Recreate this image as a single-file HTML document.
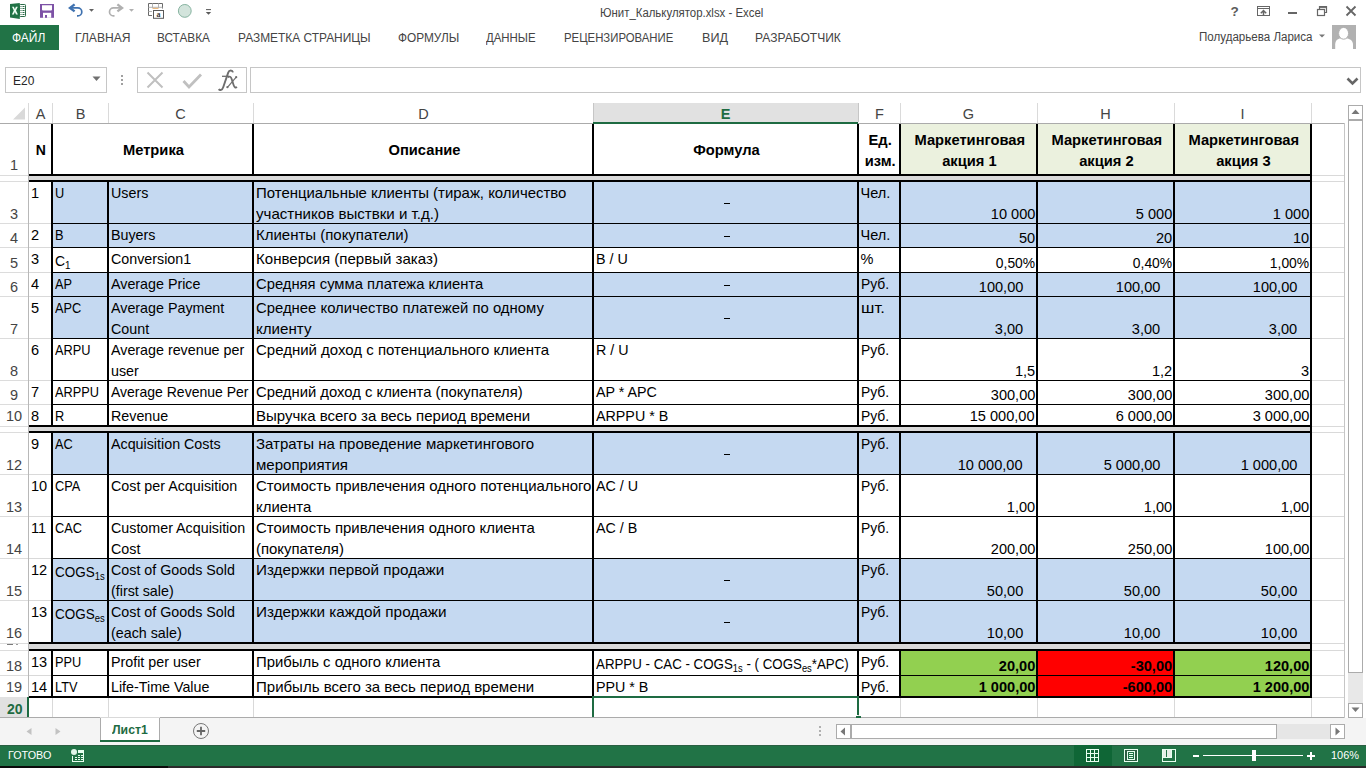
<!DOCTYPE html><html><head><meta charset="utf-8"><title>Excel</title><style>html,body{margin:0;padding:0;width:1366px;height:768px;overflow:hidden;background:#fff;font-family:"Liberation Sans",sans-serif;}#root{position:relative;width:1366px;height:768px;overflow:hidden;}</style></head><body><div id="root">
<svg style="position:absolute;left:0px;top:0px" width="60" height="22" viewBox="0 0 60 22"><rect x="19.5" y="4.5" width="6" height="12" rx="0.8" fill="#fff" stroke="#2a6b47" stroke-width="1"/><path d="M20.5 6.5h1M22.5 6.5h2M20.5 8.5h1M22.5 8.5h2M20.5 10.5h1M22.5 10.5h2M20.5 12.5h1M22.5 12.5h2M20.5 14.5h1M22.5 14.5h2" stroke="#2a6b47" stroke-width="1"/><path d="M10 4 L19.8 3 V19 L10 17.5 Z" fill="#217346"/><path d="M12 6.8 H13.9 L14.9 9.2 L15.9 6.8 H17.8 L16 10.6 L17.9 14.4 H16 L14.9 12 L13.8 14.4 H11.9 L13.8 10.6 Z" fill="#f0fff4"/><path d="M40 4 H54 V17.8 H40 Z" fill="#7d52a6"/><path d="M42 5.2 H52 V9.5 Q52 10.5 51 10.5 H43 Q42 10.5 42 9.5 Z" fill="#fff"/><rect x="43" y="12.8" width="8.2" height="5" fill="#fff"/><rect x="45" y="15" width="2" height="2.8" fill="#7d52a6"/></svg>
<svg style="position:absolute;left:64px;top:0px" width="80" height="22" viewBox="0 0 80 22"><path d="M10.6 4.4 L6 7.9 L10.6 11.4" fill="none" stroke="#3f72b0" stroke-width="2.4" stroke-linejoin="miter"/><path d="M7.5 7.9 H13.8 A4 4 0 0 1 13.8 15.9 H13" fill="none" stroke="#3f72b0" stroke-width="1.7"/><path d="M25 9 H30 L27.5 11.8 Z" fill="#606060"/><path d="M53.4 4.4 L58 7.9 L53.4 11.4" fill="none" stroke="#b0b0b0" stroke-width="2.4" stroke-linejoin="miter"/><path d="M56.5 7.9 H49.5 A4 4 0 0 0 49.5 15.9 H50.5" fill="none" stroke="#b0b0b0" stroke-width="1.7"/><path d="M65 9 H70 L67.5 11.8 Z" fill="#b0b0b0"/></svg>
<svg style="position:absolute;left:142px;top:0px" width="76" height="22" viewBox="0 0 76 22"><path d="M6.5 15.5 V3.5 H20.5 V8.5" fill="none" stroke="#6a6a6a" stroke-width="1"/><path d="M6.5 15.5 H10" stroke="#6a6a6a" stroke-width="1"/><path d="M6.5 7.3 H20.5 M10.5 3.5 V8 M16.5 3.5 V8 M6.5 11.5 H10" stroke="#b4b4b4" stroke-width="1"/><path d="M10.5 8.4 H16.5" stroke="#e8b070" stroke-width="1"/><rect x="11.5" y="10.5" width="10" height="7.8" fill="#fff" stroke="#5a5a5a" stroke-width="1"/><text x="16.6" y="16.6" font-size="8" font-family="Liberation Serif" font-weight="bold" text-anchor="middle" fill="#3a3a3a">a</text><circle cx="42.8" cy="10.9" r="6.4" fill="#d3e4dc" stroke="#86b3a0" stroke-width="1"/><path d="M64 9.6 H69" stroke="#5a5a5a" stroke-width="1"/><path d="M63.8 12 H69.2 L66.5 14.8 Z" fill="#5a5a5a"/></svg>
<div style="position:absolute;left:600px;top:7.34px;font-size:12px;line-height:12px;font-weight:400;color:#444444;white-space:nowrap;transform:scaleX(0.95);transform-origin:0 0;">Юнит_Калькулятор.xlsx - Excel</div>
<svg style="position:absolute;left:1225px;top:4px" width="141" height="16" viewBox="0 0 141 16"><text x="9.5" y="12.3" font-size="13.5" font-weight="bold" font-family="Liberation Sans" text-anchor="middle" fill="#5a5a5a">?</text><rect x="32.5" y="2.5" width="12" height="9" fill="none" stroke="#666" stroke-width="1"/><path d="M32.5 4.5 H44.5" stroke="#666" stroke-width="1"/><path d="M38.5 11.5 V6.8 M35.8 9.2 L38.5 6.5 L41.2 9.2" fill="none" stroke="#666" stroke-width="1.5"/><rect x="63" y="8" width="9" height="2" fill="#666"/><rect x="92.5" y="5.5" width="7" height="6" fill="none" stroke="#666" stroke-width="1.2"/><path d="M94.5 5.5 V2.5 H101.5 V8.5 H99.5" fill="none" stroke="#666" stroke-width="1.2"/><path d="M94.5 3.6 H101.5" stroke="#666" stroke-width="1"/><path d="M121.5 2.5 L130.5 11.5 M130.5 2.5 L121.5 11.5" stroke="#666" stroke-width="1.8"/></svg>
<div style="position:absolute;left:0px;top:25px;width:59px;height:25px;background:#217346;"></div>
<div style="position:absolute;left:12px;top:31.84px;font-size:12px;line-height:12px;font-weight:400;color:#fff;white-space:nowrap;">ФАЙЛ</div>
<div style="position:absolute;left:75px;top:31.84px;font-size:12px;line-height:12px;font-weight:400;color:#444444;white-space:nowrap;transform:scaleX(1.009);transform-origin:0 0;">ГЛАВНАЯ</div>
<div style="position:absolute;left:157px;top:31.84px;font-size:12px;line-height:12px;font-weight:400;color:#444444;white-space:nowrap;transform:scaleX(0.983);transform-origin:0 0;">ВСТАВКА</div>
<div style="position:absolute;left:237.9px;top:31.84px;font-size:12px;line-height:12px;font-weight:400;color:#444444;white-space:nowrap;transform:scaleX(0.993);transform-origin:0 0;">РАЗМЕТКА СТРАНИЦЫ</div>
<div style="position:absolute;left:398px;top:31.84px;font-size:12px;line-height:12px;font-weight:400;color:#444444;white-space:nowrap;transform:scaleX(0.987);transform-origin:0 0;">ФОРМУЛЫ</div>
<div style="position:absolute;left:486.3px;top:31.84px;font-size:12px;line-height:12px;font-weight:400;color:#444444;white-space:nowrap;transform:scaleX(0.952);transform-origin:0 0;">ДАННЫЕ</div>
<div style="position:absolute;left:564.2px;top:31.84px;font-size:12px;line-height:12px;font-weight:400;color:#444444;white-space:nowrap;transform:scaleX(0.947);transform-origin:0 0;">РЕЦЕНЗИРОВАНИЕ</div>
<div style="position:absolute;left:701.6px;top:31.84px;font-size:12px;line-height:12px;font-weight:400;color:#444444;white-space:nowrap;transform:scaleX(1.05);transform-origin:0 0;">ВИД</div>
<div style="position:absolute;left:754.6px;top:31.84px;font-size:12px;line-height:12px;font-weight:400;color:#444444;white-space:nowrap;transform:scaleX(1.004);transform-origin:0 0;">РАЗРАБОТЧИК</div>
<div style="position:absolute;left:1198.5px;top:30.84px;font-size:12px;line-height:12px;font-weight:400;color:#444444;white-space:nowrap;transform:scaleX(0.964);transform-origin:0 0;">Полударьева Лариса</div>
<svg style="position:absolute;left:1319px;top:34px" width="7" height="5"><path d="M0 0.5 H6 L3 3.5 Z" fill="#777"/></svg>
<svg style="position:absolute;left:1332px;top:25px" width="24" height="24" viewBox="0 0 24 24"><rect width="24" height="24" fill="#b1b1b1"/><path d="M3.2 24 V19.5 C3.2 15.6 5.6 13.4 8.6 13.4 H14.6 C17.8 13.4 21 15.6 21 19.5 V24 Z" fill="#fff"/><ellipse cx="11.6" cy="8.3" rx="5" ry="5.9" fill="#fff" stroke="#b1b1b1" stroke-width="1"/></svg>
<div style="position:absolute;left:5px;top:67px;width:100px;height:24px;border:1px solid #c6c6c6;background:#fff"></div>
<div style="position:absolute;left:12.5px;top:74.49px;font-size:13px;line-height:13px;font-weight:400;color:#262626;white-space:nowrap;transform:scaleX(0.92);transform-origin:0 0;">E20</div>
<svg style="position:absolute;left:92px;top:76px" width="9" height="6"><path d="M0.5 0.5 H8.5 L4.5 5 Z" fill="#707070"/></svg>
<div style="position:absolute;left:121px;top:75px;width:2px;height:2px;background:#a0a0a0;"></div>
<div style="position:absolute;left:121px;top:79px;width:2px;height:2px;background:#a0a0a0;"></div>
<div style="position:absolute;left:121px;top:83px;width:2px;height:2px;background:#a0a0a0;"></div>
<div style="position:absolute;left:137px;top:67px;width:108px;height:24px;border:1px solid #c6c6c6;background:#fff"></div>
<svg style="position:absolute;left:145px;top:71px" width="22" height="18" viewBox="0 0 22 18"><path d="M2.5 1.5 L17.5 16.5 M17.5 1.5 L2.5 16.5" stroke="#c0c0c0" stroke-width="2"/></svg>
<svg style="position:absolute;left:182px;top:72px" width="22" height="18" viewBox="0 0 22 18"><path d="M1.5 9 L7 15 L19 2.5" fill="none" stroke="#c0c0c0" stroke-width="2.8"/></svg>
<svg style="position:absolute;left:210px;top:64px" width="34" height="30" viewBox="210 64 34 30"><path d="M233 72.4 C232.4 69.9 229.2 69.7 228.2 72.6 L223.2 87.2 C222.2 90.2 219.9 90.7 218.7 89.2" fill="none" stroke="#6e6e6e" stroke-width="1.9"/><path d="M222 76.3 H229" stroke="#6e6e6e" stroke-width="1.3"/><path d="M227.6 77.2 C229.6 75.9 230.9 76.7 231.7 79.1 L233.6 85 C234.4 87.6 235.6 88 237 87" fill="none" stroke="#6e6e6e" stroke-width="1.8"/><path d="M236.4 76.8 L227.2 87.6" fill="none" stroke="#6e6e6e" stroke-width="1.2"/><circle cx="236.2" cy="77.2" r="1.1" fill="#6e6e6e"/><circle cx="227.4" cy="87.2" r="1.1" fill="#6e6e6e"/></svg>
<div style="position:absolute;left:250px;top:67px;width:1109px;height:24px;border:1px solid #c6c6c6;background:#fff"></div>
<svg style="position:absolute;left:1346px;top:77px" width="13" height="10" viewBox="0 0 13 10"><path d="M1.5 1.5 L6.5 6.5 L11.5 1.5" fill="none" stroke="#666" stroke-width="2.6"/></svg>
<div style="position:absolute;left:0px;top:718px;width:1366px;height:27px;background:#f4f4f4;"></div>
<div style="position:absolute;left:1345px;top:103px;width:21px;height:615px;background:#fff;"></div>
<div style="position:absolute;left:1348px;top:105px;width:13px;height:13px;border:1px solid #ababab;background:#fff"></div>
<svg style="position:absolute;left:1351px;top:109px" width="9" height="6"><path d="M0.5 5 L4.5 0.5 L8.5 5 Z" fill="#777"/></svg>
<div style="position:absolute;left:1348px;top:120px;width:13px;height:551px;border:1px solid #ababab;background:#fff"></div>
<div style="position:absolute;left:1348px;top:673px;width:15px;height:30px;background:#e8e8e8;"></div>
<div style="position:absolute;left:1348px;top:703px;width:13px;height:13px;border:1px solid #ababab;background:#fff"></div>
<svg style="position:absolute;left:1351px;top:707px" width="9" height="6"><path d="M0.5 0.5 L4.5 5 L8.5 0.5 Z" fill="#777"/></svg>
<svg style="position:absolute;left:26px;top:728px" width="6" height="7"><path d="M5.5 0 V7 L0.5 3.5 Z" fill="#c2c2c2"/></svg>
<svg style="position:absolute;left:55px;top:728px" width="6" height="7"><path d="M0.5 0 V7 L5.5 3.5 Z" fill="#c2c2c2"/></svg>
<div style="position:absolute;left:100px;top:717px;width:60px;height:24px;background:#fff;"></div>
<div style="position:absolute;left:100px;top:717px;width:1px;height:24px;background:#ababab;"></div>
<div style="position:absolute;left:159px;top:717px;width:1px;height:24px;background:#ababab;"></div>
<div style="position:absolute;left:100px;top:740px;width:60px;height:2px;background:#1e6b42;"></div>
<div style="position:absolute;left:101px;top:717px;width:58px;height:1px;background:#fff;"></div>
<div style="position:absolute;left:112px;top:724.42px;font-size:12.5px;line-height:12.5px;font-weight:700;color:#1e6b42;white-space:nowrap;transform:scaleX(0.98);transform-origin:0 0;">Лист1</div>
<svg style="position:absolute;left:192px;top:722px" width="18" height="18" viewBox="0 0 18 18"><circle cx="9" cy="9" r="7.5" fill="none" stroke="#777" stroke-width="1"/><path d="M9 4.8 V13.2 M4.8 9 H13.2" stroke="#666" stroke-width="1.8"/></svg>
<div style="position:absolute;left:819px;top:726px;width:2px;height:2px;background:#b0b0b0;"></div>
<div style="position:absolute;left:819px;top:730px;width:2px;height:2px;background:#b0b0b0;"></div>
<div style="position:absolute;left:819px;top:734px;width:2px;height:2px;background:#b0b0b0;"></div>
<div style="position:absolute;left:836px;top:724px;width:13px;height:13px;border:1px solid #ababab;background:#fff"></div>
<svg style="position:absolute;left:840px;top:727px" width="6" height="9"><path d="M5 0.5 V8.5 L0.5 4.5 Z" fill="#777"/></svg>
<div style="position:absolute;left:851px;top:724px;width:424px;height:13px;border:1px solid #ababab;background:#fff"></div>
<div style="position:absolute;left:1277px;top:724px;width:53px;height:15px;background:#e6e6e6;"></div>
<div style="position:absolute;left:1330px;top:724px;width:13px;height:13px;border:1px solid #ababab;background:#fff"></div>
<svg style="position:absolute;left:1335px;top:727px" width="6" height="9"><path d="M0.5 0.5 V8.5 L5 4.5 Z" fill="#777"/></svg>
<div style="position:absolute;left:0px;top:745px;width:1366px;height:21px;background:#217346;"></div>
<div style="position:absolute;left:0px;top:745px;width:1366px;height:1px;background:#2a5e42;"></div>
<div style="position:absolute;left:0px;top:766px;width:168px;height:2px;background:#0a0a0a;"></div>
<div style="position:absolute;left:168px;top:766px;width:1198px;height:2px;background:#2b2b2b;"></div>
<div style="position:absolute;left:8px;top:749.69px;font-size:11px;line-height:11px;font-weight:400;color:#fff;white-space:nowrap;transform:scaleX(0.98);transform-origin:0 0;">ГОТОВО</div>
<svg style="position:absolute;left:64px;top:745px" width="28" height="21" viewBox="64 745 28 21"><circle cx="74" cy="752" r="3" fill="#e0f5e8"/></svg>
<div style="position:absolute;left:78px;top:750px;width:6px;height:3px;background:#e8fff0;"></div>
<div style="position:absolute;left:83px;top:750px;width:1px;height:12px;background:#e8fff0;"></div>
<div style="position:absolute;left:72px;top:761px;width:12px;height:1px;background:#e8fff0;"></div>
<div style="position:absolute;left:72px;top:756px;width:1px;height:6px;background:#e8fff0;"></div>
<div style="position:absolute;left:77.5px;top:755px;width:2px;height:1px;background:#e8fff0;"></div>
<div style="position:absolute;left:80.5px;top:755px;width:2px;height:1px;background:#e8fff0;"></div>
<div style="position:absolute;left:74.5px;top:757px;width:2px;height:1px;background:#e8fff0;"></div>
<div style="position:absolute;left:77.5px;top:757px;width:2px;height:1px;background:#e8fff0;"></div>
<div style="position:absolute;left:80.5px;top:757px;width:2px;height:1px;background:#e8fff0;"></div>
<div style="position:absolute;left:74.5px;top:759px;width:2px;height:1px;background:#e8fff0;"></div>
<div style="position:absolute;left:77.5px;top:759px;width:2px;height:1px;background:#e8fff0;"></div>
<div style="position:absolute;left:80.5px;top:759px;width:2px;height:1px;background:#e8fff0;"></div>
<div style="position:absolute;left:1074px;top:745px;width:38px;height:21px;background:#0f6636;"></div>
<div style="position:absolute;left:1086px;top:749px;width:1px;height:13px;background:#e8fff0;"></div>
<div style="position:absolute;left:1090px;top:749px;width:1px;height:13px;background:#e8fff0;"></div>
<div style="position:absolute;left:1094px;top:749px;width:1px;height:13px;background:#e8fff0;"></div>
<div style="position:absolute;left:1098px;top:749px;width:1px;height:13px;background:#e8fff0;"></div>
<div style="position:absolute;left:1086px;top:749px;width:13px;height:1px;background:#e8fff0;"></div>
<div style="position:absolute;left:1086px;top:753px;width:13px;height:1px;background:#e8fff0;"></div>
<div style="position:absolute;left:1086px;top:757px;width:13px;height:1px;background:#e8fff0;"></div>
<div style="position:absolute;left:1086px;top:761px;width:13px;height:1px;background:#e8fff0;"></div>
<div style="position:absolute;left:1124px;top:749px;width:14px;height:13px;background:#e8fff0;"></div>
<div style="position:absolute;left:1125px;top:750px;width:12px;height:11px;background:#2c5e43;"></div>
<div style="position:absolute;left:1127px;top:751px;width:8px;height:9px;background:#e8fff0;"></div>
<div style="position:absolute;left:1128px;top:752px;width:6px;height:7px;background:#217346;"></div>
<div style="position:absolute;left:1129px;top:753px;width:4px;height:1px;background:#e8fff0;"></div>
<div style="position:absolute;left:1129px;top:755px;width:4px;height:1px;background:#e8fff0;"></div>
<div style="position:absolute;left:1129px;top:757px;width:4px;height:1px;background:#e8fff0;"></div>
<div style="position:absolute;left:1162px;top:749px;width:14px;height:13px;background:#e8fff0;"></div>
<div style="position:absolute;left:1163px;top:750px;width:12px;height:11px;background:#217346;"></div>
<div style="position:absolute;left:1163px;top:750px;width:3px;height:7px;background:#e6efe8;"></div>
<div style="position:absolute;left:1167px;top:750px;width:4px;height:7px;background:#e6efe8;"></div>
<div style="position:absolute;left:1162px;top:757px;width:10px;height:1px;background:#e8fff0;"></div>
<div style="position:absolute;left:1171px;top:750px;width:1px;height:8px;background:#e8fff0;"></div>
<div style="position:absolute;left:1193px;top:755px;width:6px;height:2px;background:#fff;"></div>
<div style="position:absolute;left:1203px;top:755px;width:100px;height:1px;background:#fff;"></div>
<div style="position:absolute;left:1252px;top:750px;width:4px;height:11px;background:#fff;"></div>
<div style="position:absolute;left:1307px;top:755px;width:8px;height:2px;background:#fff;"></div>
<div style="position:absolute;left:1310px;top:752px;width:2px;height:8px;background:#fff;"></div>
<div style="position:absolute;left:1331px;top:750.26px;font-size:11.5px;line-height:11.5px;font-weight:400;color:#fff;white-space:nowrap;transform:scaleX(0.95);transform-origin:0 0;">106%</div>
<div style="position:absolute;left:593px;top:103px;width:265px;height:19px;background:#e1e1e1;"></div>
<div style="position:absolute;left:593px;top:122px;width:265px;height:2px;background:#1e6b42;"></div>
<div style="position:absolute;left:28px;top:103px;width:1px;height:20px;background:#dadada;"></div>
<div style="position:absolute;left:52px;top:103px;width:1px;height:20px;background:#dadada;"></div>
<div style="position:absolute;left:108px;top:103px;width:1px;height:20px;background:#dadada;"></div>
<div style="position:absolute;left:253px;top:103px;width:1px;height:20px;background:#dadada;"></div>
<div style="position:absolute;left:593px;top:103px;width:1px;height:19px;background:#c6c6c6;"></div>
<div style="position:absolute;left:858px;top:103px;width:1px;height:19px;background:#c6c6c6;"></div>
<div style="position:absolute;left:900px;top:103px;width:1px;height:20px;background:#dadada;"></div>
<div style="position:absolute;left:1037px;top:103px;width:1px;height:20px;background:#dadada;"></div>
<div style="position:absolute;left:1174px;top:103px;width:1px;height:20px;background:#dadada;"></div>
<div style="position:absolute;left:1311px;top:103px;width:1px;height:20px;background:#dadada;"></div>
<div style="position:absolute;left:0px;top:123px;width:593px;height:1px;background:#ababab;"></div>
<div style="position:absolute;left:858px;top:123px;width:486px;height:1px;background:#ababab;"></div>
<svg style="position:absolute;left:13px;top:107px" width="13" height="13"><path d="M12 0.5 V12.5 H0 Z" fill="#d9d9d9"/></svg>
<div style="position:absolute;left:40.5px;top:106.72px;font-size:14.5px;line-height:14.5px;font-weight:400;color:#444;white-space:nowrap;transform:translateX(-50%) scaleX(1.0);transform-origin:0 0;">A</div>
<div style="position:absolute;left:80.5px;top:106.72px;font-size:14.5px;line-height:14.5px;font-weight:400;color:#444;white-space:nowrap;transform:translateX(-50%) scaleX(1.0);transform-origin:0 0;">B</div>
<div style="position:absolute;left:180.5px;top:106.72px;font-size:14.5px;line-height:14.5px;font-weight:400;color:#444;white-space:nowrap;transform:translateX(-50%) scaleX(1.0);transform-origin:0 0;">C</div>
<div style="position:absolute;left:423.5px;top:106.72px;font-size:14.5px;line-height:14.5px;font-weight:400;color:#444;white-space:nowrap;transform:translateX(-50%) scaleX(1.0);transform-origin:0 0;">D</div>
<div style="position:absolute;left:725.5px;top:106.72px;font-size:14.5px;line-height:14.5px;font-weight:700;color:#1e6b42;white-space:nowrap;transform:translateX(-50%) scaleX(1.0);transform-origin:0 0;">E</div>
<div style="position:absolute;left:879.5px;top:106.72px;font-size:14.5px;line-height:14.5px;font-weight:400;color:#444;white-space:nowrap;transform:translateX(-50%) scaleX(1.0);transform-origin:0 0;">F</div>
<div style="position:absolute;left:968.5px;top:106.72px;font-size:14.5px;line-height:14.5px;font-weight:400;color:#444;white-space:nowrap;transform:translateX(-50%) scaleX(1.0);transform-origin:0 0;">G</div>
<div style="position:absolute;left:1105.5px;top:106.72px;font-size:14.5px;line-height:14.5px;font-weight:400;color:#444;white-space:nowrap;transform:translateX(-50%) scaleX(1.0);transform-origin:0 0;">H</div>
<div style="position:absolute;left:1242.5px;top:106.72px;font-size:14.5px;line-height:14.5px;font-weight:400;color:#444;white-space:nowrap;transform:translateX(-50%) scaleX(1.0);transform-origin:0 0;">I</div>
<div style="position:absolute;left:28px;top:123px;width:1px;height:594px;background:#b8b8b8;"></div>
<div style="position:absolute;left:0px;top:175px;width:28px;height:1px;background:#dcdcdc;"></div>
<div style="position:absolute;left:0px;top:181px;width:28px;height:1px;background:#dcdcdc;"></div>
<div style="position:absolute;left:0px;top:223px;width:28px;height:1px;background:#dcdcdc;"></div>
<div style="position:absolute;left:0px;top:247px;width:28px;height:1px;background:#dcdcdc;"></div>
<div style="position:absolute;left:0px;top:272px;width:28px;height:1px;background:#dcdcdc;"></div>
<div style="position:absolute;left:0px;top:296px;width:28px;height:1px;background:#dcdcdc;"></div>
<div style="position:absolute;left:0px;top:338px;width:28px;height:1px;background:#dcdcdc;"></div>
<div style="position:absolute;left:0px;top:380px;width:28px;height:1px;background:#dcdcdc;"></div>
<div style="position:absolute;left:0px;top:404px;width:28px;height:1px;background:#dcdcdc;"></div>
<div style="position:absolute;left:0px;top:426px;width:28px;height:1px;background:#dcdcdc;"></div>
<div style="position:absolute;left:0px;top:432px;width:28px;height:1px;background:#dcdcdc;"></div>
<div style="position:absolute;left:0px;top:474px;width:28px;height:1px;background:#dcdcdc;"></div>
<div style="position:absolute;left:0px;top:516px;width:28px;height:1px;background:#dcdcdc;"></div>
<div style="position:absolute;left:0px;top:558px;width:28px;height:1px;background:#dcdcdc;"></div>
<div style="position:absolute;left:0px;top:600px;width:28px;height:1px;background:#dcdcdc;"></div>
<div style="position:absolute;left:0px;top:643px;width:28px;height:1px;background:#dcdcdc;"></div>
<div style="position:absolute;left:0px;top:650px;width:28px;height:1px;background:#dcdcdc;"></div>
<div style="position:absolute;left:0px;top:675px;width:28px;height:1px;background:#dcdcdc;"></div>
<div style="position:absolute;left:0px;top:697px;width:28px;height:1px;background:#dcdcdc;"></div>
<div style="position:absolute;left:0px;top:717px;width:28px;height:1px;background:#dcdcdc;"></div>
<div style="position:absolute;left:0px;top:697px;width:27px;height:20px;background:#e1e1e1;"></div>
<div style="position:absolute;left:27px;top:697px;width:2px;height:20px;background:#1e6b42;"></div>
<div style="position:absolute;left:14px;top:157.72px;font-size:14.5px;line-height:14.5px;font-weight:400;color:#444;white-space:nowrap;transform:translateX(-50%) scaleX(1.0);transform-origin:0 0;">1</div>
<div style="position:absolute;left:14px;top:206.72px;font-size:14.5px;line-height:14.5px;font-weight:400;color:#444;white-space:nowrap;transform:translateX(-50%) scaleX(1.0);transform-origin:0 0;">3</div>
<div style="position:absolute;left:14px;top:230.72px;font-size:14.5px;line-height:14.5px;font-weight:400;color:#444;white-space:nowrap;transform:translateX(-50%) scaleX(1.0);transform-origin:0 0;">4</div>
<div style="position:absolute;left:14px;top:255.72px;font-size:14.5px;line-height:14.5px;font-weight:400;color:#444;white-space:nowrap;transform:translateX(-50%) scaleX(1.0);transform-origin:0 0;">5</div>
<div style="position:absolute;left:14px;top:279.72px;font-size:14.5px;line-height:14.5px;font-weight:400;color:#444;white-space:nowrap;transform:translateX(-50%) scaleX(1.0);transform-origin:0 0;">6</div>
<div style="position:absolute;left:14px;top:321.72px;font-size:14.5px;line-height:14.5px;font-weight:400;color:#444;white-space:nowrap;transform:translateX(-50%) scaleX(1.0);transform-origin:0 0;">7</div>
<div style="position:absolute;left:14px;top:363.72px;font-size:14.5px;line-height:14.5px;font-weight:400;color:#444;white-space:nowrap;transform:translateX(-50%) scaleX(1.0);transform-origin:0 0;">8</div>
<div style="position:absolute;left:14px;top:387.72px;font-size:14.5px;line-height:14.5px;font-weight:400;color:#444;white-space:nowrap;transform:translateX(-50%) scaleX(1.0);transform-origin:0 0;">9</div>
<div style="position:absolute;left:14px;top:408.72px;font-size:14.5px;line-height:14.5px;font-weight:400;color:#444;white-space:nowrap;transform:translateX(-50%) scaleX(1.0);transform-origin:0 0;">10</div>
<div style="position:absolute;left:14px;top:457.72px;font-size:14.5px;line-height:14.5px;font-weight:400;color:#444;white-space:nowrap;transform:translateX(-50%) scaleX(1.0);transform-origin:0 0;">12</div>
<div style="position:absolute;left:14px;top:499.72px;font-size:14.5px;line-height:14.5px;font-weight:400;color:#444;white-space:nowrap;transform:translateX(-50%) scaleX(1.0);transform-origin:0 0;">13</div>
<div style="position:absolute;left:14px;top:541.72px;font-size:14.5px;line-height:14.5px;font-weight:400;color:#444;white-space:nowrap;transform:translateX(-50%) scaleX(1.0);transform-origin:0 0;">14</div>
<div style="position:absolute;left:14px;top:583.72px;font-size:14.5px;line-height:14.5px;font-weight:400;color:#444;white-space:nowrap;transform:translateX(-50%) scaleX(1.0);transform-origin:0 0;">15</div>
<div style="position:absolute;left:14px;top:625.72px;font-size:14.5px;line-height:14.5px;font-weight:400;color:#444;white-space:nowrap;transform:translateX(-50%) scaleX(1.0);transform-origin:0 0;">16</div>
<div style="position:absolute;left:14px;top:658.72px;font-size:14.5px;line-height:14.5px;font-weight:400;color:#444;white-space:nowrap;transform:translateX(-50%) scaleX(1.0);transform-origin:0 0;">18</div>
<div style="position:absolute;left:14px;top:679.72px;font-size:14.5px;line-height:14.5px;font-weight:400;color:#444;white-space:nowrap;transform:translateX(-50%) scaleX(1.0);transform-origin:0 0;">19</div>
<div style="position:absolute;left:7px;top:644px;width:6px;height:1px;background:#7a7a7a;"></div>
<div style="position:absolute;left:16px;top:644px;width:2px;height:1px;background:#9a9a9a;"></div>
<div style="position:absolute;left:14.5px;top:702.22px;font-size:14.5px;line-height:14.5px;font-weight:700;color:#1e6b42;white-space:nowrap;transform:translateX(-50%) scaleX(0.97);transform-origin:0 0;">20</div>
<div style="position:absolute;left:29px;top:175px;width:1315px;height:1px;background:#d9d9d9;"></div>
<div style="position:absolute;left:29px;top:181px;width:1315px;height:1px;background:#d9d9d9;"></div>
<div style="position:absolute;left:29px;top:223px;width:1315px;height:1px;background:#d9d9d9;"></div>
<div style="position:absolute;left:29px;top:247px;width:1315px;height:1px;background:#d9d9d9;"></div>
<div style="position:absolute;left:29px;top:272px;width:1315px;height:1px;background:#d9d9d9;"></div>
<div style="position:absolute;left:29px;top:296px;width:1315px;height:1px;background:#d9d9d9;"></div>
<div style="position:absolute;left:29px;top:338px;width:1315px;height:1px;background:#d9d9d9;"></div>
<div style="position:absolute;left:29px;top:380px;width:1315px;height:1px;background:#d9d9d9;"></div>
<div style="position:absolute;left:29px;top:404px;width:1315px;height:1px;background:#d9d9d9;"></div>
<div style="position:absolute;left:29px;top:426px;width:1315px;height:1px;background:#d9d9d9;"></div>
<div style="position:absolute;left:29px;top:432px;width:1315px;height:1px;background:#d9d9d9;"></div>
<div style="position:absolute;left:29px;top:474px;width:1315px;height:1px;background:#d9d9d9;"></div>
<div style="position:absolute;left:29px;top:516px;width:1315px;height:1px;background:#d9d9d9;"></div>
<div style="position:absolute;left:29px;top:558px;width:1315px;height:1px;background:#d9d9d9;"></div>
<div style="position:absolute;left:29px;top:600px;width:1315px;height:1px;background:#d9d9d9;"></div>
<div style="position:absolute;left:29px;top:643px;width:1315px;height:1px;background:#d9d9d9;"></div>
<div style="position:absolute;left:29px;top:650px;width:1315px;height:1px;background:#d9d9d9;"></div>
<div style="position:absolute;left:29px;top:675px;width:1315px;height:1px;background:#d9d9d9;"></div>
<div style="position:absolute;left:29px;top:697px;width:1315px;height:1px;background:#d9d9d9;"></div>
<div style="position:absolute;left:29px;top:717px;width:1315px;height:1px;background:#d9d9d9;"></div>
<div style="position:absolute;left:52px;top:124px;width:1px;height:593px;background:#d9d9d9;"></div>
<div style="position:absolute;left:108px;top:124px;width:1px;height:593px;background:#d9d9d9;"></div>
<div style="position:absolute;left:253px;top:124px;width:1px;height:593px;background:#d9d9d9;"></div>
<div style="position:absolute;left:593px;top:124px;width:1px;height:593px;background:#d9d9d9;"></div>
<div style="position:absolute;left:858px;top:124px;width:1px;height:593px;background:#d9d9d9;"></div>
<div style="position:absolute;left:900px;top:124px;width:1px;height:593px;background:#d9d9d9;"></div>
<div style="position:absolute;left:1037px;top:124px;width:1px;height:593px;background:#d9d9d9;"></div>
<div style="position:absolute;left:1174px;top:124px;width:1px;height:593px;background:#d9d9d9;"></div>
<div style="position:absolute;left:1311px;top:124px;width:1px;height:593px;background:#d9d9d9;"></div>
<div style="position:absolute;left:1344px;top:124px;width:1px;height:593px;background:#d9d9d9;"></div>
<div style="position:absolute;left:0px;top:717px;width:100px;height:1px;background:#ababab;"></div>
<div style="position:absolute;left:160px;top:717px;width:1184px;height:1px;background:#ababab;"></div>
<div style="position:absolute;left:1344px;top:123px;width:1px;height:595px;background:#c6c6c6;"></div>
<div style="position:absolute;left:29px;top:124px;width:1282px;height:51px;background:#fff;"></div>
<div style="position:absolute;left:29px;top:182px;width:1282px;height:41px;background:#fff;"></div>
<div style="position:absolute;left:29px;top:224px;width:1282px;height:23px;background:#fff;"></div>
<div style="position:absolute;left:29px;top:248px;width:1282px;height:24px;background:#fff;"></div>
<div style="position:absolute;left:29px;top:273px;width:1282px;height:23px;background:#fff;"></div>
<div style="position:absolute;left:29px;top:297px;width:1282px;height:41px;background:#fff;"></div>
<div style="position:absolute;left:29px;top:339px;width:1282px;height:41px;background:#fff;"></div>
<div style="position:absolute;left:29px;top:381px;width:1282px;height:23px;background:#fff;"></div>
<div style="position:absolute;left:29px;top:405px;width:1282px;height:21px;background:#fff;"></div>
<div style="position:absolute;left:29px;top:433px;width:1282px;height:41px;background:#fff;"></div>
<div style="position:absolute;left:29px;top:475px;width:1282px;height:41px;background:#fff;"></div>
<div style="position:absolute;left:29px;top:517px;width:1282px;height:41px;background:#fff;"></div>
<div style="position:absolute;left:29px;top:559px;width:1282px;height:41px;background:#fff;"></div>
<div style="position:absolute;left:29px;top:601px;width:1282px;height:42px;background:#fff;"></div>
<div style="position:absolute;left:29px;top:651px;width:1282px;height:24px;background:#fff;"></div>
<div style="position:absolute;left:29px;top:676px;width:1282px;height:21px;background:#fff;"></div>
<div style="position:absolute;left:901px;top:124px;width:136px;height:51px;background:#ebf1de;"></div>
<div style="position:absolute;left:1038px;top:124px;width:136px;height:51px;background:#ebf1de;"></div>
<div style="position:absolute;left:1175px;top:124px;width:136px;height:51px;background:#ebf1de;"></div>
<div style="position:absolute;left:53px;top:182px;width:1258px;height:41px;background:#c5d9f1;"></div>
<div style="position:absolute;left:53px;top:224px;width:1258px;height:23px;background:#c5d9f1;"></div>
<div style="position:absolute;left:53px;top:273px;width:1258px;height:23px;background:#c5d9f1;"></div>
<div style="position:absolute;left:53px;top:297px;width:1258px;height:41px;background:#c5d9f1;"></div>
<div style="position:absolute;left:53px;top:433px;width:1258px;height:41px;background:#c5d9f1;"></div>
<div style="position:absolute;left:53px;top:559px;width:1258px;height:41px;background:#c5d9f1;"></div>
<div style="position:absolute;left:53px;top:601px;width:1258px;height:42px;background:#c5d9f1;"></div>
<div style="position:absolute;left:901px;top:651px;width:136px;height:24px;background:#92d050;"></div>
<div style="position:absolute;left:1038px;top:651px;width:136px;height:24px;background:#ff0000;"></div>
<div style="position:absolute;left:1175px;top:651px;width:136px;height:24px;background:#92d050;"></div>
<div style="position:absolute;left:901px;top:676px;width:136px;height:21px;background:#92d050;"></div>
<div style="position:absolute;left:1038px;top:676px;width:136px;height:21px;background:#ff0000;"></div>
<div style="position:absolute;left:1175px;top:676px;width:136px;height:21px;background:#92d050;"></div>
<div style="position:absolute;left:29px;top:175px;width:1282px;height:7px;background:#d9d9d9;"></div>
<div style="position:absolute;left:29px;top:426px;width:1282px;height:7px;background:#d9d9d9;"></div>
<div style="position:absolute;left:29px;top:643px;width:1282px;height:8px;background:#d9d9d9;"></div>
<div style="position:absolute;left:52px;top:223px;width:1259px;height:1px;background:#000;"></div>
<div style="position:absolute;left:52px;top:247px;width:1259px;height:1px;background:#000;"></div>
<div style="position:absolute;left:52px;top:272px;width:1259px;height:1px;background:#000;"></div>
<div style="position:absolute;left:52px;top:296px;width:1259px;height:1px;background:#000;"></div>
<div style="position:absolute;left:52px;top:338px;width:1259px;height:1px;background:#000;"></div>
<div style="position:absolute;left:52px;top:380px;width:1259px;height:1px;background:#000;"></div>
<div style="position:absolute;left:52px;top:404px;width:1259px;height:1px;background:#000;"></div>
<div style="position:absolute;left:52px;top:474px;width:1259px;height:1px;background:#000;"></div>
<div style="position:absolute;left:52px;top:516px;width:1259px;height:1px;background:#000;"></div>
<div style="position:absolute;left:52px;top:558px;width:1259px;height:1px;background:#000;"></div>
<div style="position:absolute;left:52px;top:600px;width:1259px;height:1px;background:#000;"></div>
<div style="position:absolute;left:52px;top:675px;width:1259px;height:1px;background:#000;"></div>
<div style="position:absolute;left:29px;top:174px;width:1283px;height:2px;background:#000;"></div>
<div style="position:absolute;left:29px;top:180px;width:1283px;height:2px;background:#000;"></div>
<div style="position:absolute;left:29px;top:425px;width:1283px;height:2px;background:#000;"></div>
<div style="position:absolute;left:29px;top:431px;width:1283px;height:2px;background:#000;"></div>
<div style="position:absolute;left:29px;top:642px;width:1283px;height:2px;background:#000;"></div>
<div style="position:absolute;left:29px;top:649px;width:1283px;height:2px;background:#000;"></div>
<div style="position:absolute;left:29px;top:696px;width:1283px;height:2px;background:#000;"></div>
<div style="position:absolute;left:51px;top:124px;width:2px;height:51px;background:#000;"></div>
<div style="position:absolute;left:252px;top:124px;width:2px;height:51px;background:#000;"></div>
<div style="position:absolute;left:592px;top:124px;width:2px;height:51px;background:#000;"></div>
<div style="position:absolute;left:857px;top:124px;width:2px;height:51px;background:#000;"></div>
<div style="position:absolute;left:899px;top:124px;width:2px;height:51px;background:#000;"></div>
<div style="position:absolute;left:1036px;top:124px;width:2px;height:51px;background:#000;"></div>
<div style="position:absolute;left:1173px;top:124px;width:2px;height:51px;background:#000;"></div>
<div style="position:absolute;left:51px;top:181px;width:2px;height:245px;background:#000;"></div>
<div style="position:absolute;left:107px;top:181px;width:2px;height:245px;background:#000;"></div>
<div style="position:absolute;left:252px;top:181px;width:2px;height:245px;background:#000;"></div>
<div style="position:absolute;left:592px;top:181px;width:2px;height:245px;background:#000;"></div>
<div style="position:absolute;left:857px;top:181px;width:2px;height:245px;background:#000;"></div>
<div style="position:absolute;left:899px;top:181px;width:2px;height:245px;background:#000;"></div>
<div style="position:absolute;left:1036px;top:181px;width:2px;height:245px;background:#000;"></div>
<div style="position:absolute;left:1173px;top:181px;width:2px;height:245px;background:#000;"></div>
<div style="position:absolute;left:51px;top:432px;width:2px;height:211px;background:#000;"></div>
<div style="position:absolute;left:107px;top:432px;width:2px;height:211px;background:#000;"></div>
<div style="position:absolute;left:252px;top:432px;width:2px;height:211px;background:#000;"></div>
<div style="position:absolute;left:592px;top:432px;width:2px;height:211px;background:#000;"></div>
<div style="position:absolute;left:857px;top:432px;width:2px;height:211px;background:#000;"></div>
<div style="position:absolute;left:899px;top:432px;width:2px;height:211px;background:#000;"></div>
<div style="position:absolute;left:1036px;top:432px;width:2px;height:211px;background:#000;"></div>
<div style="position:absolute;left:1173px;top:432px;width:2px;height:211px;background:#000;"></div>
<div style="position:absolute;left:51px;top:650px;width:2px;height:47px;background:#000;"></div>
<div style="position:absolute;left:107px;top:650px;width:2px;height:47px;background:#000;"></div>
<div style="position:absolute;left:252px;top:650px;width:2px;height:47px;background:#000;"></div>
<div style="position:absolute;left:592px;top:650px;width:2px;height:47px;background:#000;"></div>
<div style="position:absolute;left:857px;top:650px;width:2px;height:47px;background:#000;"></div>
<div style="position:absolute;left:899px;top:650px;width:2px;height:47px;background:#000;"></div>
<div style="position:absolute;left:1036px;top:650px;width:2px;height:47px;background:#000;"></div>
<div style="position:absolute;left:1173px;top:650px;width:2px;height:47px;background:#000;"></div>
<div style="position:absolute;left:1310px;top:124px;width:2px;height:574px;background:#000;"></div>
<div style="position:absolute;left:40.5px;top:142.72px;font-size:14.5px;line-height:14.5px;font-weight:700;color:#000;white-space:nowrap;transform:translateX(-50%) scaleX(0.9652999999999999);transform-origin:0 0;">N</div>
<div style="position:absolute;left:152.5px;top:142.72px;font-size:14.5px;line-height:14.5px;font-weight:700;color:#000;white-space:nowrap;transform:translateX(-50%) scaleX(1.0143);transform-origin:0 0;">Метрика</div>
<div style="position:absolute;left:424px;top:142.72px;font-size:14.5px;line-height:14.5px;font-weight:700;color:#000;white-space:nowrap;transform:translateX(-50%) scaleX(1.0143);transform-origin:0 0;">Описание</div>
<div style="position:absolute;left:725.5px;top:142.72px;font-size:14.5px;line-height:14.5px;font-weight:700;color:#000;white-space:nowrap;transform:translateX(-50%) scaleX(1.0143);transform-origin:0 0;">Формула</div>
<div style="position:absolute;left:879.5px;top:132.72px;font-size:14.5px;line-height:14.5px;font-weight:700;color:#000;white-space:nowrap;transform:translateX(-50%) scaleX(1.0143);transform-origin:0 0;">Ед.</div>
<div style="position:absolute;left:879.5px;top:153.72px;font-size:14.5px;line-height:14.5px;font-weight:700;color:#000;white-space:nowrap;transform:translateX(-50%) scaleX(1.0143);transform-origin:0 0;">изм.</div>
<div style="position:absolute;left:968.5px;top:132.72px;font-size:14.5px;line-height:14.5px;font-weight:700;color:#000;white-space:nowrap;transform:translateX(-50%) scaleX(1.0143);transform-origin:0 0;">Маркетинговая</div>
<div style="position:absolute;left:968.5px;top:153.72px;font-size:14.5px;line-height:14.5px;font-weight:700;color:#000;white-space:nowrap;transform:translateX(-50%) scaleX(1.0143);transform-origin:0 0;">акция 1</div>
<div style="position:absolute;left:1105.5px;top:132.72px;font-size:14.5px;line-height:14.5px;font-weight:700;color:#000;white-space:nowrap;transform:translateX(-50%) scaleX(1.0143);transform-origin:0 0;">Маркетинговая</div>
<div style="position:absolute;left:1105.5px;top:153.72px;font-size:14.5px;line-height:14.5px;font-weight:700;color:#000;white-space:nowrap;transform:translateX(-50%) scaleX(1.0143);transform-origin:0 0;">акция 2</div>
<div style="position:absolute;left:1242.5px;top:132.72px;font-size:14.5px;line-height:14.5px;font-weight:700;color:#000;white-space:nowrap;transform:translateX(-50%) scaleX(1.0143);transform-origin:0 0;">Маркетинговая</div>
<div style="position:absolute;left:1242.5px;top:153.72px;font-size:14.5px;line-height:14.5px;font-weight:700;color:#000;white-space:nowrap;transform:translateX(-50%) scaleX(1.0143);transform-origin:0 0;">акция 3</div>
<div style="position:absolute;left:30.5px;top:185.72px;font-size:14.5px;line-height:14.5px;font-weight:400;color:#000;white-space:nowrap;transform:scaleX(1.005);transform-origin:0 0;">1</div>
<div style="position:absolute;left:30.5px;top:227.72px;font-size:14.5px;line-height:14.5px;font-weight:400;color:#000;white-space:nowrap;transform:scaleX(1.005);transform-origin:0 0;">2</div>
<div style="position:absolute;left:30.5px;top:251.72px;font-size:14.5px;line-height:14.5px;font-weight:400;color:#000;white-space:nowrap;transform:scaleX(1.005);transform-origin:0 0;">3</div>
<div style="position:absolute;left:30.5px;top:276.72px;font-size:14.5px;line-height:14.5px;font-weight:400;color:#000;white-space:nowrap;transform:scaleX(1.005);transform-origin:0 0;">4</div>
<div style="position:absolute;left:30.5px;top:300.72px;font-size:14.5px;line-height:14.5px;font-weight:400;color:#000;white-space:nowrap;transform:scaleX(1.005);transform-origin:0 0;">5</div>
<div style="position:absolute;left:30.5px;top:342.72px;font-size:14.5px;line-height:14.5px;font-weight:400;color:#000;white-space:nowrap;transform:scaleX(1.005);transform-origin:0 0;">6</div>
<div style="position:absolute;left:30.5px;top:384.72px;font-size:14.5px;line-height:14.5px;font-weight:400;color:#000;white-space:nowrap;transform:scaleX(1.005);transform-origin:0 0;">7</div>
<div style="position:absolute;left:30.5px;top:408.72px;font-size:14.5px;line-height:14.5px;font-weight:400;color:#000;white-space:nowrap;transform:scaleX(1.005);transform-origin:0 0;">8</div>
<div style="position:absolute;left:30.5px;top:436.72px;font-size:14.5px;line-height:14.5px;font-weight:400;color:#000;white-space:nowrap;transform:scaleX(1.005);transform-origin:0 0;">9</div>
<div style="position:absolute;left:30.5px;top:478.72px;font-size:14.5px;line-height:14.5px;font-weight:400;color:#000;white-space:nowrap;transform:scaleX(1.005);transform-origin:0 0;">10</div>
<div style="position:absolute;left:30.5px;top:520.72px;font-size:14.5px;line-height:14.5px;font-weight:400;color:#000;white-space:nowrap;transform:scaleX(1.005);transform-origin:0 0;">11</div>
<div style="position:absolute;left:30.5px;top:562.72px;font-size:14.5px;line-height:14.5px;font-weight:400;color:#000;white-space:nowrap;transform:scaleX(1.005);transform-origin:0 0;">12</div>
<div style="position:absolute;left:30.5px;top:604.72px;font-size:14.5px;line-height:14.5px;font-weight:400;color:#000;white-space:nowrap;transform:scaleX(1.005);transform-origin:0 0;">13</div>
<div style="position:absolute;left:30.5px;top:654.72px;font-size:14.5px;line-height:14.5px;font-weight:400;color:#000;white-space:nowrap;transform:scaleX(1.005);transform-origin:0 0;">13</div>
<div style="position:absolute;left:30.5px;top:679.72px;font-size:14.5px;line-height:14.5px;font-weight:400;color:#000;white-space:nowrap;transform:scaleX(1.005);transform-origin:0 0;">14</div>
<div style="position:absolute;left:54.5px;top:185.72px;font-size:14.5px;line-height:14.5px;font-weight:400;color:#000;white-space:nowrap;transform:scaleX(0.88);transform-origin:0 0;">U</div>
<div style="position:absolute;left:54.5px;top:227.72px;font-size:14.5px;line-height:14.5px;font-weight:400;color:#000;white-space:nowrap;transform:scaleX(0.88);transform-origin:0 0;">B</div>
<div style="position:absolute;left:54.5px;top:276.72px;font-size:14.5px;line-height:14.5px;font-weight:400;color:#000;white-space:nowrap;transform:scaleX(0.88);transform-origin:0 0;">AP</div>
<div style="position:absolute;left:54.5px;top:300.72px;font-size:14.5px;line-height:14.5px;font-weight:400;color:#000;white-space:nowrap;transform:scaleX(0.88);transform-origin:0 0;">APC</div>
<div style="position:absolute;left:54.5px;top:342.72px;font-size:14.5px;line-height:14.5px;font-weight:400;color:#000;white-space:nowrap;transform:scaleX(0.88);transform-origin:0 0;">ARPU</div>
<div style="position:absolute;left:54.5px;top:384.72px;font-size:14.5px;line-height:14.5px;font-weight:400;color:#000;white-space:nowrap;transform:scaleX(0.88);transform-origin:0 0;">ARPPU</div>
<div style="position:absolute;left:54.5px;top:408.72px;font-size:14.5px;line-height:14.5px;font-weight:400;color:#000;white-space:nowrap;transform:scaleX(0.88);transform-origin:0 0;">R</div>
<div style="position:absolute;left:54.5px;top:436.72px;font-size:14.5px;line-height:14.5px;font-weight:400;color:#000;white-space:nowrap;transform:scaleX(0.88);transform-origin:0 0;">AC</div>
<div style="position:absolute;left:54.5px;top:478.72px;font-size:14.5px;line-height:14.5px;font-weight:400;color:#000;white-space:nowrap;transform:scaleX(0.88);transform-origin:0 0;">CPA</div>
<div style="position:absolute;left:54.5px;top:520.72px;font-size:14.5px;line-height:14.5px;font-weight:400;color:#000;white-space:nowrap;transform:scaleX(0.88);transform-origin:0 0;">CAC</div>
<div style="position:absolute;left:54.5px;top:654.72px;font-size:14.5px;line-height:14.5px;font-weight:400;color:#000;white-space:nowrap;transform:scaleX(0.88);transform-origin:0 0;">PPU</div>
<div style="position:absolute;left:54.5px;top:679.72px;font-size:14.5px;line-height:14.5px;font-weight:400;color:#000;white-space:nowrap;transform:scaleX(0.88);transform-origin:0 0;">LTV</div>
<div style="position:absolute;left:54.5px;top:253.72px;font-size:14.5px;line-height:14.5px;font-weight:400;color:#000;white-space:nowrap;transform:scaleX(0.96);transform-origin:0 0;">C<span style="font-size:10.2px;position:relative;top:3px">1</span></div>
<div style="position:absolute;left:54.5px;top:564.72px;font-size:14.5px;line-height:14.5px;font-weight:400;color:#000;white-space:nowrap;transform:scaleX(0.93);transform-origin:0 0;">COGS<span style="font-size:10.2px;position:relative;top:3px">1s</span></div>
<div style="position:absolute;left:54.5px;top:606.72px;font-size:14.5px;line-height:14.5px;font-weight:400;color:#000;white-space:nowrap;transform:scaleX(0.93);transform-origin:0 0;">COGS<span style="font-size:10.2px;position:relative;top:3px">es</span></div>
<div style="position:absolute;left:110.5px;top:185.72px;font-size:14.5px;line-height:14.5px;font-weight:400;color:#000;white-space:nowrap;transform:scaleX(0.985);transform-origin:0 0;">Users</div>
<div style="position:absolute;left:110.5px;top:227.72px;font-size:14.5px;line-height:14.5px;font-weight:400;color:#000;white-space:nowrap;transform:scaleX(0.985);transform-origin:0 0;">Buyers</div>
<div style="position:absolute;left:110.5px;top:251.72px;font-size:14.5px;line-height:14.5px;font-weight:400;color:#000;white-space:nowrap;transform:scaleX(0.985);transform-origin:0 0;">Conversion1</div>
<div style="position:absolute;left:110.5px;top:276.72px;font-size:14.5px;line-height:14.5px;font-weight:400;color:#000;white-space:nowrap;transform:scaleX(0.985);transform-origin:0 0;">Average Price</div>
<div style="position:absolute;left:110.5px;top:300.72px;font-size:14.5px;line-height:14.5px;font-weight:400;color:#000;white-space:nowrap;transform:scaleX(0.985);transform-origin:0 0;">Average Payment</div>
<div style="position:absolute;left:110.5px;top:321.72px;font-size:14.5px;line-height:14.5px;font-weight:400;color:#000;white-space:nowrap;transform:scaleX(0.985);transform-origin:0 0;">Count</div>
<div style="position:absolute;left:110.5px;top:342.72px;font-size:14.5px;line-height:14.5px;font-weight:400;color:#000;white-space:nowrap;transform:scaleX(0.985);transform-origin:0 0;">Average revenue per</div>
<div style="position:absolute;left:110.5px;top:363.72px;font-size:14.5px;line-height:14.5px;font-weight:400;color:#000;white-space:nowrap;transform:scaleX(0.985);transform-origin:0 0;">user</div>
<div style="position:absolute;left:110.5px;top:384.72px;font-size:14.5px;line-height:14.5px;font-weight:400;color:#000;white-space:nowrap;transform:scaleX(0.965);transform-origin:0 0;">Average Revenue Per</div>
<div style="position:absolute;left:110.5px;top:408.72px;font-size:14.5px;line-height:14.5px;font-weight:400;color:#000;white-space:nowrap;transform:scaleX(0.985);transform-origin:0 0;">Revenue</div>
<div style="position:absolute;left:110.5px;top:436.72px;font-size:14.5px;line-height:14.5px;font-weight:400;color:#000;white-space:nowrap;transform:scaleX(0.985);transform-origin:0 0;">Acquisition Costs</div>
<div style="position:absolute;left:110.5px;top:478.72px;font-size:14.5px;line-height:14.5px;font-weight:400;color:#000;white-space:nowrap;transform:scaleX(0.985);transform-origin:0 0;">Cost per Acquisition</div>
<div style="position:absolute;left:110.5px;top:520.72px;font-size:14.5px;line-height:14.5px;font-weight:400;color:#000;white-space:nowrap;transform:scaleX(0.985);transform-origin:0 0;">Customer Acquisition</div>
<div style="position:absolute;left:110.5px;top:541.72px;font-size:14.5px;line-height:14.5px;font-weight:400;color:#000;white-space:nowrap;transform:scaleX(0.985);transform-origin:0 0;">Cost</div>
<div style="position:absolute;left:110.5px;top:562.72px;font-size:14.5px;line-height:14.5px;font-weight:400;color:#000;white-space:nowrap;transform:scaleX(0.985);transform-origin:0 0;">Cost of Goods Sold</div>
<div style="position:absolute;left:110.5px;top:583.72px;font-size:14.5px;line-height:14.5px;font-weight:400;color:#000;white-space:nowrap;transform:scaleX(0.985);transform-origin:0 0;">(first sale)</div>
<div style="position:absolute;left:110.5px;top:604.72px;font-size:14.5px;line-height:14.5px;font-weight:400;color:#000;white-space:nowrap;transform:scaleX(0.985);transform-origin:0 0;">Cost of Goods Sold</div>
<div style="position:absolute;left:110.5px;top:625.72px;font-size:14.5px;line-height:14.5px;font-weight:400;color:#000;white-space:nowrap;transform:scaleX(0.985);transform-origin:0 0;">(each sale)</div>
<div style="position:absolute;left:110.5px;top:654.72px;font-size:14.5px;line-height:14.5px;font-weight:400;color:#000;white-space:nowrap;transform:scaleX(0.985);transform-origin:0 0;">Profit per user</div>
<div style="position:absolute;left:110.5px;top:679.72px;font-size:14.5px;line-height:14.5px;font-weight:400;color:#000;white-space:nowrap;transform:scaleX(0.985);transform-origin:0 0;">Life-Time Value</div>
<div style="position:absolute;left:255.5px;top:185.72px;font-size:14.5px;line-height:14.5px;font-weight:400;color:#000;white-space:nowrap;transform:scaleX(1.03);transform-origin:0 0;">Потенциальные клиенты (тираж, количество</div>
<div style="position:absolute;left:255.5px;top:206.72px;font-size:14.5px;line-height:14.5px;font-weight:400;color:#000;white-space:nowrap;transform:scaleX(1.041);transform-origin:0 0;">участников выствки и т.д.)</div>
<div style="position:absolute;left:255.5px;top:227.72px;font-size:14.5px;line-height:14.5px;font-weight:400;color:#000;white-space:nowrap;transform:scaleX(1.033);transform-origin:0 0;">Клиенты (покупатели)</div>
<div style="position:absolute;left:255.5px;top:251.72px;font-size:14.5px;line-height:14.5px;font-weight:400;color:#000;white-space:nowrap;transform:scaleX(1.038);transform-origin:0 0;">Конверсия (первый заказ)</div>
<div style="position:absolute;left:255.5px;top:276.72px;font-size:14.5px;line-height:14.5px;font-weight:400;color:#000;white-space:nowrap;transform:scaleX(1.02);transform-origin:0 0;">Средняя сумма платежа клиента</div>
<div style="position:absolute;left:255.5px;top:300.72px;font-size:14.5px;line-height:14.5px;font-weight:400;color:#000;white-space:nowrap;transform:scaleX(1.025);transform-origin:0 0;">Среднее количество платежей по одному</div>
<div style="position:absolute;left:255.5px;top:321.72px;font-size:14.5px;line-height:14.5px;font-weight:400;color:#000;white-space:nowrap;transform:scaleX(1.043);transform-origin:0 0;">клиенту</div>
<div style="position:absolute;left:255.5px;top:342.72px;font-size:14.5px;line-height:14.5px;font-weight:400;color:#000;white-space:nowrap;transform:scaleX(1.034);transform-origin:0 0;">Средний доход с потенциального клиента</div>
<div style="position:absolute;left:255.5px;top:384.72px;font-size:14.5px;line-height:14.5px;font-weight:400;color:#000;white-space:nowrap;transform:scaleX(1.022);transform-origin:0 0;">Средний доход с клиента (покупателя)</div>
<div style="position:absolute;left:255.5px;top:408.72px;font-size:14.5px;line-height:14.5px;font-weight:400;color:#000;white-space:nowrap;transform:scaleX(1.035);transform-origin:0 0;">Выручка всего за весь период времени</div>
<div style="position:absolute;left:255.5px;top:436.72px;font-size:14.5px;line-height:14.5px;font-weight:400;color:#000;white-space:nowrap;transform:scaleX(1.035);transform-origin:0 0;">Затраты на проведение маркетингового</div>
<div style="position:absolute;left:255.5px;top:457.72px;font-size:14.5px;line-height:14.5px;font-weight:400;color:#000;white-space:nowrap;transform:scaleX(1.038);transform-origin:0 0;">мероприятия</div>
<div style="position:absolute;left:255.5px;top:478.72px;font-size:14.5px;line-height:14.5px;font-weight:400;color:#000;white-space:nowrap;transform:scaleX(1.033);transform-origin:0 0;">Стоимость привлечения одного потенциального</div>
<div style="position:absolute;left:255.5px;top:499.72px;font-size:14.5px;line-height:14.5px;font-weight:400;color:#000;white-space:nowrap;transform:scaleX(1.03);transform-origin:0 0;">клиента</div>
<div style="position:absolute;left:255.5px;top:520.72px;font-size:14.5px;line-height:14.5px;font-weight:400;color:#000;white-space:nowrap;transform:scaleX(1.03);transform-origin:0 0;">Стоимость привлечения одного клиента</div>
<div style="position:absolute;left:255.5px;top:541.72px;font-size:14.5px;line-height:14.5px;font-weight:400;color:#000;white-space:nowrap;transform:scaleX(1.03);transform-origin:0 0;">(покупателя)</div>
<div style="position:absolute;left:255.5px;top:562.72px;font-size:14.5px;line-height:14.5px;font-weight:400;color:#000;white-space:nowrap;transform:scaleX(1.05);transform-origin:0 0;">Издержки первой продажи</div>
<div style="position:absolute;left:255.5px;top:604.72px;font-size:14.5px;line-height:14.5px;font-weight:400;color:#000;white-space:nowrap;transform:scaleX(1.055);transform-origin:0 0;">Издержки каждой продажи</div>
<div style="position:absolute;left:255.5px;top:654.72px;font-size:14.5px;line-height:14.5px;font-weight:400;color:#000;white-space:nowrap;transform:scaleX(1.026);transform-origin:0 0;">Прибыль с одного клиента</div>
<div style="position:absolute;left:255.5px;top:679.72px;font-size:14.5px;line-height:14.5px;font-weight:400;color:#000;white-space:nowrap;transform:scaleX(1.035);transform-origin:0 0;">Прибыль всего за весь период времени</div>
<div style="position:absolute;left:595.5px;top:251.72px;font-size:14.5px;line-height:14.5px;font-weight:400;color:#000;white-space:nowrap;transform:scaleX(0.985);transform-origin:0 0;">B / U</div>
<div style="position:absolute;left:595.5px;top:342.72px;font-size:14.5px;line-height:14.5px;font-weight:400;color:#000;white-space:nowrap;transform:scaleX(0.985);transform-origin:0 0;">R / U</div>
<div style="position:absolute;left:595.5px;top:384.72px;font-size:14.5px;line-height:14.5px;font-weight:400;color:#000;white-space:nowrap;transform:scaleX(0.985);transform-origin:0 0;">AP * APC</div>
<div style="position:absolute;left:595.5px;top:408.72px;font-size:14.5px;line-height:14.5px;font-weight:400;color:#000;white-space:nowrap;transform:scaleX(0.985);transform-origin:0 0;">ARPPU * B</div>
<div style="position:absolute;left:595.5px;top:478.72px;font-size:14.5px;line-height:14.5px;font-weight:400;color:#000;white-space:nowrap;transform:scaleX(0.985);transform-origin:0 0;">AC / U</div>
<div style="position:absolute;left:595.5px;top:520.72px;font-size:14.5px;line-height:14.5px;font-weight:400;color:#000;white-space:nowrap;transform:scaleX(0.985);transform-origin:0 0;">AC / B</div>
<div style="position:absolute;left:595.5px;top:679.72px;font-size:14.5px;line-height:14.5px;font-weight:400;color:#000;white-space:nowrap;transform:scaleX(0.985);transform-origin:0 0;">PPU * B</div>
<div style="position:absolute;left:595.5px;top:656.72px;font-size:14.5px;line-height:14.5px;font-weight:400;color:#000;white-space:nowrap;transform:scaleX(0.918);transform-origin:0 0;">ARPPU - CAC - COGS<span style="font-size:10.2px;position:relative;top:3px">1s</span> - ( COGS<span style="font-size:10.2px;position:relative;top:3px">es</span>*APC)</div>
<div style="position:absolute;left:724px;top:203px;width:6px;height:1px;background:#000;"></div>
<div style="position:absolute;left:724px;top:236px;width:6px;height:1px;background:#000;"></div>
<div style="position:absolute;left:724px;top:285px;width:6px;height:1px;background:#000;"></div>
<div style="position:absolute;left:724px;top:318px;width:6px;height:1px;background:#000;"></div>
<div style="position:absolute;left:724px;top:454px;width:6px;height:1px;background:#000;"></div>
<div style="position:absolute;left:724px;top:580px;width:6px;height:1px;background:#000;"></div>
<div style="position:absolute;left:724px;top:622px;width:6px;height:1px;background:#000;"></div>
<div style="position:absolute;left:860.5px;top:185.72px;font-size:14.5px;line-height:14.5px;font-weight:400;color:#000;white-space:nowrap;">Чел.</div>
<div style="position:absolute;left:860.5px;top:227.72px;font-size:14.5px;line-height:14.5px;font-weight:400;color:#000;white-space:nowrap;">Чел.</div>
<div style="position:absolute;left:860.5px;top:251.72px;font-size:14.5px;line-height:14.5px;font-weight:400;color:#000;white-space:nowrap;">%</div>
<div style="position:absolute;left:860.5px;top:276.72px;font-size:14.5px;line-height:14.5px;font-weight:400;color:#000;white-space:nowrap;transform:scaleX(0.956);transform-origin:0 0;">Руб.</div>
<div style="position:absolute;left:860.5px;top:300.72px;font-size:14.5px;line-height:14.5px;font-weight:400;color:#000;white-space:nowrap;transform:scaleX(1.15);transform-origin:0 0;">шт.</div>
<div style="position:absolute;left:860.5px;top:342.72px;font-size:14.5px;line-height:14.5px;font-weight:400;color:#000;white-space:nowrap;transform:scaleX(0.956);transform-origin:0 0;">Руб.</div>
<div style="position:absolute;left:860.5px;top:384.72px;font-size:14.5px;line-height:14.5px;font-weight:400;color:#000;white-space:nowrap;transform:scaleX(0.956);transform-origin:0 0;">Руб.</div>
<div style="position:absolute;left:860.5px;top:408.72px;font-size:14.5px;line-height:14.5px;font-weight:400;color:#000;white-space:nowrap;transform:scaleX(0.956);transform-origin:0 0;">Руб.</div>
<div style="position:absolute;left:860.5px;top:436.72px;font-size:14.5px;line-height:14.5px;font-weight:400;color:#000;white-space:nowrap;transform:scaleX(0.956);transform-origin:0 0;">Руб.</div>
<div style="position:absolute;left:860.5px;top:478.72px;font-size:14.5px;line-height:14.5px;font-weight:400;color:#000;white-space:nowrap;transform:scaleX(0.956);transform-origin:0 0;">Руб.</div>
<div style="position:absolute;left:860.5px;top:520.72px;font-size:14.5px;line-height:14.5px;font-weight:400;color:#000;white-space:nowrap;transform:scaleX(0.956);transform-origin:0 0;">Руб.</div>
<div style="position:absolute;left:860.5px;top:562.72px;font-size:14.5px;line-height:14.5px;font-weight:400;color:#000;white-space:nowrap;transform:scaleX(0.956);transform-origin:0 0;">Руб.</div>
<div style="position:absolute;left:860.5px;top:604.72px;font-size:14.5px;line-height:14.5px;font-weight:400;color:#000;white-space:nowrap;transform:scaleX(0.956);transform-origin:0 0;">Руб.</div>
<div style="position:absolute;left:860.5px;top:654.72px;font-size:14.5px;line-height:14.5px;font-weight:400;color:#000;white-space:nowrap;transform:scaleX(0.956);transform-origin:0 0;">Руб.</div>
<div style="position:absolute;left:860.5px;top:679.72px;font-size:14.5px;line-height:14.5px;font-weight:400;color:#000;white-space:nowrap;transform:scaleX(0.956);transform-origin:0 0;">Руб.</div>
<div style="position:absolute;right:331px;top:206.72px;font-size:14.5px;line-height:14.5px;font-weight:400;color:#000;white-space:nowrap;transform:scaleX(1.005);transform-origin:100% 0;">10 000</div>
<div style="position:absolute;right:194px;top:206.72px;font-size:14.5px;line-height:14.5px;font-weight:400;color:#000;white-space:nowrap;transform:scaleX(1.005);transform-origin:100% 0;">5 000</div>
<div style="position:absolute;right:57px;top:206.72px;font-size:14.5px;line-height:14.5px;font-weight:400;color:#000;white-space:nowrap;transform:scaleX(1.005);transform-origin:100% 0;">1 000</div>
<div style="position:absolute;right:331px;top:230.72px;font-size:14.5px;line-height:14.5px;font-weight:400;color:#000;white-space:nowrap;transform:scaleX(1.005);transform-origin:100% 0;">50</div>
<div style="position:absolute;right:194px;top:230.72px;font-size:14.5px;line-height:14.5px;font-weight:400;color:#000;white-space:nowrap;transform:scaleX(1.005);transform-origin:100% 0;">20</div>
<div style="position:absolute;right:57px;top:230.72px;font-size:14.5px;line-height:14.5px;font-weight:400;color:#000;white-space:nowrap;transform:scaleX(1.005);transform-origin:100% 0;">10</div>
<div style="position:absolute;right:331px;top:255.72px;font-size:14.5px;line-height:14.5px;font-weight:400;color:#000;white-space:nowrap;transform:scaleX(0.955);transform-origin:100% 0;">0,50%</div>
<div style="position:absolute;right:194px;top:255.72px;font-size:14.5px;line-height:14.5px;font-weight:400;color:#000;white-space:nowrap;transform:scaleX(0.955);transform-origin:100% 0;">0,40%</div>
<div style="position:absolute;right:57px;top:255.72px;font-size:14.5px;line-height:14.5px;font-weight:400;color:#000;white-space:nowrap;transform:scaleX(0.955);transform-origin:100% 0;">1,00%</div>
<div style="position:absolute;right:343px;top:279.72px;font-size:14.5px;line-height:14.5px;font-weight:400;color:#000;white-space:nowrap;transform:scaleX(1.005);transform-origin:100% 0;">100,00</div>
<div style="position:absolute;right:206px;top:279.72px;font-size:14.5px;line-height:14.5px;font-weight:400;color:#000;white-space:nowrap;transform:scaleX(1.005);transform-origin:100% 0;">100,00</div>
<div style="position:absolute;right:69px;top:279.72px;font-size:14.5px;line-height:14.5px;font-weight:400;color:#000;white-space:nowrap;transform:scaleX(1.005);transform-origin:100% 0;">100,00</div>
<div style="position:absolute;right:343px;top:321.72px;font-size:14.5px;line-height:14.5px;font-weight:400;color:#000;white-space:nowrap;transform:scaleX(1.005);transform-origin:100% 0;">3,00</div>
<div style="position:absolute;right:206px;top:321.72px;font-size:14.5px;line-height:14.5px;font-weight:400;color:#000;white-space:nowrap;transform:scaleX(1.005);transform-origin:100% 0;">3,00</div>
<div style="position:absolute;right:69px;top:321.72px;font-size:14.5px;line-height:14.5px;font-weight:400;color:#000;white-space:nowrap;transform:scaleX(1.005);transform-origin:100% 0;">3,00</div>
<div style="position:absolute;right:331px;top:363.72px;font-size:14.5px;line-height:14.5px;font-weight:400;color:#000;white-space:nowrap;transform:scaleX(1.005);transform-origin:100% 0;">1,5</div>
<div style="position:absolute;right:194px;top:363.72px;font-size:14.5px;line-height:14.5px;font-weight:400;color:#000;white-space:nowrap;transform:scaleX(1.005);transform-origin:100% 0;">1,2</div>
<div style="position:absolute;right:57px;top:363.72px;font-size:14.5px;line-height:14.5px;font-weight:400;color:#000;white-space:nowrap;transform:scaleX(1.005);transform-origin:100% 0;">3</div>
<div style="position:absolute;right:331px;top:387.72px;font-size:14.5px;line-height:14.5px;font-weight:400;color:#000;white-space:nowrap;transform:scaleX(1.005);transform-origin:100% 0;">300,00</div>
<div style="position:absolute;right:194px;top:387.72px;font-size:14.5px;line-height:14.5px;font-weight:400;color:#000;white-space:nowrap;transform:scaleX(1.005);transform-origin:100% 0;">300,00</div>
<div style="position:absolute;right:57px;top:387.72px;font-size:14.5px;line-height:14.5px;font-weight:400;color:#000;white-space:nowrap;transform:scaleX(1.005);transform-origin:100% 0;">300,00</div>
<div style="position:absolute;right:331px;top:408.72px;font-size:14.5px;line-height:14.5px;font-weight:400;color:#000;white-space:nowrap;transform:scaleX(1.005);transform-origin:100% 0;">15 000,00</div>
<div style="position:absolute;right:194px;top:408.72px;font-size:14.5px;line-height:14.5px;font-weight:400;color:#000;white-space:nowrap;transform:scaleX(1.005);transform-origin:100% 0;">6 000,00</div>
<div style="position:absolute;right:57px;top:408.72px;font-size:14.5px;line-height:14.5px;font-weight:400;color:#000;white-space:nowrap;transform:scaleX(1.005);transform-origin:100% 0;">3 000,00</div>
<div style="position:absolute;right:343px;top:457.72px;font-size:14.5px;line-height:14.5px;font-weight:400;color:#000;white-space:nowrap;transform:scaleX(1.005);transform-origin:100% 0;">10 000,00</div>
<div style="position:absolute;right:206px;top:457.72px;font-size:14.5px;line-height:14.5px;font-weight:400;color:#000;white-space:nowrap;transform:scaleX(1.005);transform-origin:100% 0;">5 000,00</div>
<div style="position:absolute;right:69px;top:457.72px;font-size:14.5px;line-height:14.5px;font-weight:400;color:#000;white-space:nowrap;transform:scaleX(1.005);transform-origin:100% 0;">1 000,00</div>
<div style="position:absolute;right:331px;top:499.72px;font-size:14.5px;line-height:14.5px;font-weight:400;color:#000;white-space:nowrap;transform:scaleX(1.005);transform-origin:100% 0;">1,00</div>
<div style="position:absolute;right:194px;top:499.72px;font-size:14.5px;line-height:14.5px;font-weight:400;color:#000;white-space:nowrap;transform:scaleX(1.005);transform-origin:100% 0;">1,00</div>
<div style="position:absolute;right:57px;top:499.72px;font-size:14.5px;line-height:14.5px;font-weight:400;color:#000;white-space:nowrap;transform:scaleX(1.005);transform-origin:100% 0;">1,00</div>
<div style="position:absolute;right:331px;top:541.72px;font-size:14.5px;line-height:14.5px;font-weight:400;color:#000;white-space:nowrap;transform:scaleX(1.005);transform-origin:100% 0;">200,00</div>
<div style="position:absolute;right:194px;top:541.72px;font-size:14.5px;line-height:14.5px;font-weight:400;color:#000;white-space:nowrap;transform:scaleX(1.005);transform-origin:100% 0;">250,00</div>
<div style="position:absolute;right:57px;top:541.72px;font-size:14.5px;line-height:14.5px;font-weight:400;color:#000;white-space:nowrap;transform:scaleX(1.005);transform-origin:100% 0;">100,00</div>
<div style="position:absolute;right:343px;top:583.72px;font-size:14.5px;line-height:14.5px;font-weight:400;color:#000;white-space:nowrap;transform:scaleX(1.005);transform-origin:100% 0;">50,00</div>
<div style="position:absolute;right:206px;top:583.72px;font-size:14.5px;line-height:14.5px;font-weight:400;color:#000;white-space:nowrap;transform:scaleX(1.005);transform-origin:100% 0;">50,00</div>
<div style="position:absolute;right:69px;top:583.72px;font-size:14.5px;line-height:14.5px;font-weight:400;color:#000;white-space:nowrap;transform:scaleX(1.005);transform-origin:100% 0;">50,00</div>
<div style="position:absolute;right:343px;top:625.72px;font-size:14.5px;line-height:14.5px;font-weight:400;color:#000;white-space:nowrap;transform:scaleX(1.005);transform-origin:100% 0;">10,00</div>
<div style="position:absolute;right:206px;top:625.72px;font-size:14.5px;line-height:14.5px;font-weight:400;color:#000;white-space:nowrap;transform:scaleX(1.005);transform-origin:100% 0;">10,00</div>
<div style="position:absolute;right:69px;top:625.72px;font-size:14.5px;line-height:14.5px;font-weight:400;color:#000;white-space:nowrap;transform:scaleX(1.005);transform-origin:100% 0;">10,00</div>
<div style="position:absolute;right:331px;top:658.72px;font-size:14.5px;line-height:14.5px;font-weight:700;color:#000;white-space:nowrap;transform:scaleX(1.005);transform-origin:100% 0;">20,00</div>
<div style="position:absolute;right:194px;top:658.72px;font-size:14.5px;line-height:14.5px;font-weight:700;color:#000;white-space:nowrap;transform:scaleX(1.005);transform-origin:100% 0;">-30,00</div>
<div style="position:absolute;right:57px;top:658.72px;font-size:14.5px;line-height:14.5px;font-weight:700;color:#000;white-space:nowrap;transform:scaleX(1.005);transform-origin:100% 0;">120,00</div>
<div style="position:absolute;right:331px;top:679.72px;font-size:14.5px;line-height:14.5px;font-weight:700;color:#000;white-space:nowrap;transform:scaleX(1.005);transform-origin:100% 0;">1 000,00</div>
<div style="position:absolute;right:194px;top:679.72px;font-size:14.5px;line-height:14.5px;font-weight:700;color:#000;white-space:nowrap;transform:scaleX(1.005);transform-origin:100% 0;">-600,00</div>
<div style="position:absolute;right:57px;top:679.72px;font-size:14.5px;line-height:14.5px;font-weight:700;color:#000;white-space:nowrap;transform:scaleX(1.005);transform-origin:100% 0;">1 200,00</div>
<div style="position:absolute;left:592px;top:696px;width:267px;height:2px;background:#1e6b42;"></div>
<div style="position:absolute;left:592px;top:696px;width:2px;height:21px;background:#1e6b42;"></div>
<div style="position:absolute;left:857px;top:696px;width:2px;height:19px;background:#1e6b42;"></div>
<div style="position:absolute;left:856px;top:716px;width:5px;height:2px;background:#1e6b42;"></div>
</div></body></html>
